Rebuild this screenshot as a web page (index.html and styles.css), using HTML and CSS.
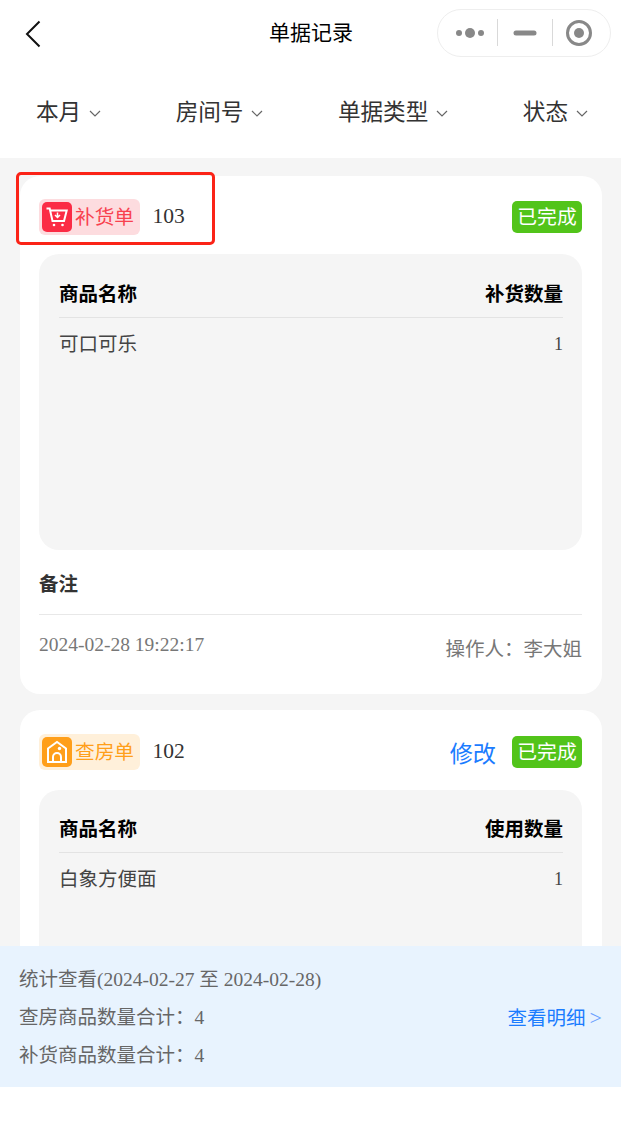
FILE: index.html
```html
<!DOCTYPE html>
<html lang="zh">
<head>
<meta charset="utf-8">
<title>单据记录</title>
<link rel="stylesheet" href="styles.css">
</head>
<body>
<div class="page">
  <header class="nav">
    <svg class="back" width="16" height="28" viewBox="0 0 16 28"><path d="M14.5 1.5 2 14l12.500 12.500" fill="none" stroke="#111" stroke-width="2"/></svg>
    <div class="nav-title">单据记录</div>
    <div class="capsule">
      <svg width="174" height="48" viewBox="0 0 174 48">
        <circle cx="22" cy="24" r="3" fill="#888"/><circle cx="33" cy="24" r="5" fill="#888"/><circle cx="44" cy="24" r="3" fill="#888"/>
        <path d="M60.500 10v27M115.500 10v27" stroke="#d9d9d9" stroke-width="1"/>
        <path d="M79 24h18" stroke="#888" stroke-width="5" stroke-linecap="round"/>
        <circle cx="142" cy="24" r="11.500" fill="none" stroke="#888" stroke-width="3"/><circle cx="142" cy="24" r="5" fill="#888"/>
      </svg>
    </div>
  </header>

  <nav class="filters">
    <div class="filter">本月<svg class="chev" width="12" height="8" viewBox="0 0 12 8"><path d="M1 1l5 5 5-5" fill="none" stroke="#666" stroke-width="1.200"/></svg></div>
    <div class="filter">房间号<svg class="chev" width="12" height="8" viewBox="0 0 12 8"><path d="M1 1l5 5 5-5" fill="none" stroke="#666" stroke-width="1.200"/></svg></div>
    <div class="filter">单据类型<svg class="chev" width="12" height="8" viewBox="0 0 12 8"><path d="M1 1l5 5 5-5" fill="none" stroke="#666" stroke-width="1.200"/></svg></div>
    <div class="filter">状态<svg class="chev" width="12" height="8" viewBox="0 0 12 8"><path d="M1 1l5 5 5-5" fill="none" stroke="#666" stroke-width="1.200"/></svg></div>
  </nav>

  <main class="list">
    <section class="card">
      <div class="card-head">
        <div class="tag tag-red">
          <span class="tag-icon icon-red">
            <svg width="24" height="24" viewBox="0 0 24 24" fill="none" stroke="#fff" stroke-width="2"><path d="M1.500 3.500h3.200l2.800 12.500h11.500l2.700-10.500H6"/><path d="M12.500 7.500v4.500M10 10l2.500 2.500L15 10" stroke-width="1.500"/><circle cx="9" cy="20" r="1.300" fill="#fff" stroke="none"/><circle cx="17.500" cy="20" r="1.300" fill="#fff" stroke="none"/></svg>
          </span>
          <span class="tag-text">补货单</span>
        </div>
        <span class="room">103</span>
        <span class="status">已完成</span>
      </div>
      <div class="goods">
        <div class="goods-head"><span>商品名称</span><span>补货数量</span></div>
        <div class="goods-row"><span class="goods-name">可口可乐</span><span class="qty">1</span></div>
      </div>
      <div class="remark">备注</div>
      <div class="card-foot"><span class="time">2024-02-28 19:22:17</span><span class="operator">操作人：李大姐</span></div>
    </section>

    <section class="card">
      <div class="card-head">
        <div class="tag tag-orange">
          <span class="tag-icon icon-orange">
            <svg width="24" height="24" viewBox="0 0 24 24" fill="none" stroke="#fff" stroke-width="2"><path d="M3 22V8.500L12 2l9 6.500V22z"/><path d="M8 22v-5a4 4 0 0 1 8 0v5"/><circle cx="14.500" cy="8.500" r="1.700" fill="#fff" stroke="none"/></svg>
          </span>
          <span class="tag-text">查房单</span>
        </div>
        <span class="room">102</span>
        <span class="edit">修改</span>
        <span class="status">已完成</span>
      </div>
      <div class="goods">
        <div class="goods-head"><span>商品名称</span><span>使用数量</span></div>
        <div class="goods-row"><span class="goods-name">白象方便面</span><span class="qty">1</span></div>
      </div>
    </section>
  </main>

  <footer class="stats">
    <div class="stats-line">统计查看(2024-02-27 至 2024-02-28)</div>
    <div class="stats-line stats-split"><span>查房商品数量合计：4</span><span class="detail">查看明细<span class="detail-arrow">&gt;</span></span></div>
    <div class="stats-line">补货商品数量合计：4</div>
  </footer>
  <div class="bottom-space"></div>

  <div class="highlight"></div>
</div>
</body>
</html>
```

FILE: styles.css
```css
* { box-sizing: border-box; }
html, body { margin: 0; padding: 0; background: #fff; }
body { font-family: "Liberation Serif", "Noto Sans CJK SC", serif; color: #333; }

.page {
  position: relative;
  width: 621px;
  height: 1140px;
  display: flex;
  flex-direction: column;
  overflow: hidden;
}

.nav {
  height: 68px;
  flex: none;
  display: grid;
  grid-template-columns: 1fr auto 1fr;
  align-items: start;
  padding: 9px 10px 0 11px;
}
.back { margin: 11px 0 0 14px; }
.nav-title {
  font-size: 21px;
  line-height: 48px;
  color: #000;
}
.capsule {
  justify-self: end;
  width: 174px;
  height: 48px;
  border: 1px solid #eee;
  border-radius: 24px;
  overflow: hidden;
}
.capsule svg { display: block; margin: -1px; }

.filters {
  height: 90px;
  flex: none;
  display: flex;
  justify-content: space-between;
  align-items: center;
  padding: 0 33px 6px 36px;
}
.filter {
  display: flex;
  align-items: center;
  font-size: 22.600px;
  color: #333;
  white-space: nowrap;
}
.chev { margin-left: 8px; margin-top: 8px; }

.list {
  flex: 1;
  min-height: 0;
  overflow: hidden;
  background: #f5f5f5;
  padding: 18px 19px 0 20px;
  display: flex;
  flex-direction: column;
  gap: 16px;
}

.card {
  flex: none;
  background: #fff;
  border-radius: 20px;
  padding: 23px 20px 0 19px;
  height: 518px;
}
.card + .card { height: 400px; padding-top: 24px; }
.card + .card .goods { margin-top: 20px; }
.card + .card .goods-head { height: 63px; padding-top: 12px; }

.card-head {
  height: 36px;
  display: flex;
  align-items: center;
}
.tag {
  width: 101px;
  height: 36px;
  border-radius: 6px;
  display: flex;
  align-items: center;
  padding-left: 3px;
  font-size: 19.700px;
  gap: 3px;
  white-space: nowrap;
}
.tag-text { padding-bottom: 3px; }
.tag-red { background: #fddcdf; color: #f8414f; }
.tag-orange { background: #fff0da; color: #ff9f1a; }
.tag-icon {
  width: 30px;
  height: 30px;
  border-radius: 5px;
  display: flex;
  align-items: center;
  justify-content: center;
  flex: none;
}
.icon-red { background: #fb2c45; }
.icon-orange { background: #ff9f1a; }
.room { margin-left: 12.500px; padding-bottom: 1px; font-size: 21.500px; color: #333; }
.status {
  margin-left: auto;
  width: 70px;
  height: 32px;
  border-radius: 5px;
  background: #52c41a;
  color: #fff;
  font-size: 19.800px;
  line-height: 32px;
  text-align: center;
}
.edit { margin-left: auto; font-size: 23.200px; color: #1b7cff; }
.edit + .status { margin-left: 16px; }

.goods {
  margin-top: 19px;
  height: 296px;
  background: #f5f5f5;
  border-radius: 20px;
  padding: 0 19px 0 20px;
}
.goods-head {
  height: 64px;
  display: flex;
  justify-content: space-between;
  align-items: center;
  padding-top: 13px;
  border-bottom: 1px solid #e3e3e3;
  font-size: 19.500px;
  font-weight: 700;
  color: #000;
}
.goods-row {
  display: flex;
  justify-content: space-between;
  align-items: center;
  height: 52px;
  font-size: 19.500px;
  color: #444;
}
.goods-name { padding-bottom: 4px; }
.qty { font-size: 18px; }

.remark {
  height: 65px;
  line-height: 70px;
  border-bottom: 1px solid #e8e8e8;
  font-size: 19.500px;
  font-weight: 700;
  color: #333;
}
.card-foot {
  display: flex;
  justify-content: space-between;
  color: #777;
  padding-top: 18px;
}
.time { font-size: 19.500px; line-height: 24px; }
.operator { font-size: 19.500px; line-height: 32px; padding-top: 1px; }

.stats {
  flex: none;
  height: 141px;
  background: #e8f3fe;
  padding: 15px 19px 0 19px;
  color: #666;
  font-size: 19.500px;
}
.stats-line { height: 38px; line-height: 38px; }
.stats-split { display: flex; justify-content: space-between; }
.detail { color: #1b7cff; }
.detail-arrow { margin-left: 4px; font-size: 22px; color: #6a9eff; }
.bottom-space { height: 53px; flex: none; background: #fff; }

.highlight {
  position: absolute;
  left: 16px;
  top: 172px;
  width: 199px;
  height: 73px;
  border: 3px solid #fb2317;
  border-radius: 5px;
}
```
